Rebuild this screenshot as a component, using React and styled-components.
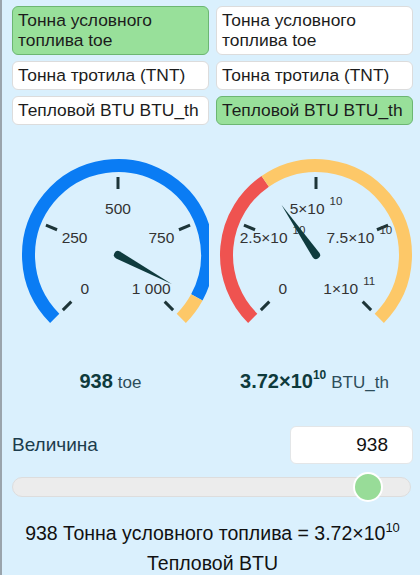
import React from 'react'
import styled, { createGlobalStyle } from 'styled-components'

const GlobalStyle = createGlobalStyle`
  body {
    margin: 0;
    background: #daf0fd;
    font-family: "Liberation Sans", Arial, sans-serif;
  }
`

const Page = styled.div`
  min-height: 575px;
  box-sizing: border-box;
  border-left: 2px solid #9aa4ac;
  padding: 6px 7px 0 10px;
`

const UnitGrid = styled.div`
  display: grid;
  grid-template-columns: 1fr 1fr;
  column-gap: 7px;
  row-gap: 6px;
`

const UnitButton = styled.div`
  box-sizing: border-box;
  padding: 3px 5px 4px;
  border: 1px solid ${p => (p.$active ? '#6cb672' : '#dcdcdc')};
  border-radius: 6px;
  background: ${p => (p.$active ? '#98e09a' : '#ffffff')};
  color: #1c1c1c;
  font-size: 17.4px;
  line-height: 20px;
  white-space: nowrap;
  overflow: hidden;
`

const TwoLine = styled.span`
  display: block;
  white-space: normal;
`

const GaugeRow = styled.div`
  display: grid;
  grid-template-columns: 1fr 1fr;
  column-gap: 7px;
  margin-top: 26px;
`

const GaugeSvg = styled.svg`
  display: block;
  width: 197px;
  height: 190px;
`

const ValueRow = styled.div`
  display: grid;
  grid-template-columns: 1fr 1fr;
  column-gap: 7px;
  margin-top: 28px;
  line-height: 24px;
  text-align: center;
`

const Value = styled.div`
  color: #0e3a3c;
`

const Num = styled.b`
  font-size: 20px;
`

const NumSup = styled.sup`
  font-size: 12px;
  font-weight: bold;
  vertical-align: 9px;
  line-height: 0;
`

const Unit = styled.span`
  font-size: 17px;
  color: #2d4d5a;
  margin-left: 5px;
`

const InputRow = styled.div`
  display: flex;
  align-items: center;
  justify-content: space-between;
  margin-top: 31px;
`

const Label = styled.span`
  font-size: 19px;
  color: #1c3c4c;
`

const AmountBox = styled.div`
  box-sizing: border-box;
  width: 123px;
  height: 38px;
  padding-right: 24px;
  border: 1px solid #e3e6e8;
  border-radius: 6px;
  background: #ffffff;
  font-size: 19px;
  line-height: 36px;
  text-align: right;
  color: #111;
`

const Slider = styled.div`
  position: relative;
  height: 30px;
  margin: 8px 2px 0 0;
  display: flex;
  align-items: center;
`

const Track = styled.div`
  box-sizing: border-box;
  width: 100%;
  height: 20px;
  border: 1px solid #dddddd;
  border-radius: 10px;
  background: #ececec;
`

const Thumb = styled.div`
  position: absolute;
  top: 0;
  box-sizing: border-box;
  width: 30px;
  height: 30px;
  margin-left: -15px;
  border: 2px solid #ffffff;
  border-radius: 50%;
  background: #98dc98;
`

const Result = styled.div`
  margin-top: 16px;
  font-size: 19.5px;
  line-height: 30px;
  text-align: center;
  color: #111;
`

const ResSup = styled.sup`
  font-size: 13px;
  vertical-align: 8px;
  line-height: 0;
`

const units = [
  ['Тонна условного топлива toe', true, 'Тонна условного топлива toe', false],
  ['Тонна тротила (TNT)', false, 'Тонна тротила (TNT)', false],
  ['Тепловой BTU BTU_th', false, 'Тепловой BTU BTU_th', true],
]

const R = 89.5
const rad = a => (a * Math.PI) / 180
const pt = (cx, cy, r, a) => [cx + r * Math.sin(rad(a)), cy - r * Math.cos(rad(a))]

function arc(cx, cy, r, a0, a1) {
  const [x0, y0] = pt(cx, cy, r, a0)
  const [x1, y1] = pt(cx, cy, r, a1)
  const large = a1 - a0 > 180 ? 1 : 0
  return `M${x0} ${y0} A${r} ${r} 0 ${large} 1 ${x1} ${y1}`
}

function needle(cx, cy, a) {
  const [tx, ty] = pt(cx, cy, 61, a)
  const [lx, ly] = pt(cx, cy, 4, a - 90)
  const [rx, ry] = pt(cx, cy, 4, a + 90)
  const [bx, by] = pt(cx, cy, 4, a + 180)
  return `M${lx} ${ly} L${tx} ${ty} L${rx} ${ry} A4 4 0 0 1 ${bx} ${by} A4 4 0 0 1 ${lx} ${ly}Z`
}

const angles = [-135, -67.5, 0, 67.5, 135]

function Gauge({ cx, cy, frac, fill, labels }) {
  const a = -135 + 270 * frac
  return (
    <GaugeSvg viewBox="0 0 197 190">
      <path d={arc(cx, cy, R, -135, a)} stroke={fill} strokeWidth="13" fill="none" />
      <path d={arc(cx, cy, R, a, 135)} stroke="#fdc868" strokeWidth="13" fill="none" />
      {angles.map((t, i) => {
        const [x0, y0] = pt(cx, cy, 66, t)
        const [x1, y1] = pt(cx, cy, 78, t)
        const [lx, ly] = pt(cx, cy, 47, t)
        const [main, sup] = labels[i]
        return (
          <g key={t}>
            <line x1={x0} y1={y0} x2={x1} y2={y1} stroke="#1d3538" strokeWidth="3" />
            <text x={lx} y={ly + 5.5} textAnchor="middle" fontSize="15.5" fill="#333"
              fontFamily='"Liberation Sans", Arial, sans-serif'>
              {main}
              {sup && <tspan dx="5" dy="-9" fontSize="11.5">{sup}</tspan>}
            </text>
          </g>
        )
      })}
      <path d={needle(cx, cy, a)} fill="#0f3b3e" />
    </GaugeSvg>
  )
}

export default function App() {
  const value = 938
  return (
    <>
      <GlobalStyle />
      <Page>
        <UnitGrid>
          {units.map(([l, la, r, ra], i) => (
            <React.Fragment key={i}>
              <UnitButton $active={la}>{i === 0 ? <TwoLine>{l}</TwoLine> : l}</UnitButton>
              <UnitButton $active={ra}>{i === 0 ? <TwoLine>{r}</TwoLine> : r}</UnitButton>
            </React.Fragment>
          ))}
        </UnitGrid>

        <GaugeRow>
          <Gauge cx={106} cy={104} frac={0.938} fill="#0a7cf4"
            labels={[['0'], ['250'], ['500'], ['750'], ['1 000']]} />
          <Gauge cx={100} cy={104} frac={0.372} fill="#ef5350"
            labels={[['0'], ['2.5×10', '10'], ['5×10', '10'], ['7.5×10', '10'], ['1×10', '11']]} />
        </GaugeRow>

        <ValueRow>
          <Value><Num>938</Num><Unit>toe</Unit></Value>
          <Value><Num>3.72×10<NumSup>10</NumSup></Num><Unit>BTU_th</Unit></Value>
        </ValueRow>

        <InputRow>
          <Label>Величина</Label>
          <AmountBox>{value}</AmountBox>
        </InputRow>

        <Slider>
          <Track />
          <Thumb style={{ left: `${(value / 1000) * 95.1}%` }} />
        </Slider>

        <Result>
          938 Тонна условного топлива = 3.72×10<ResSup>10</ResSup>
          <br />
          Тепловой BTU
        </Result>
      </Page>
    </>
  )
}
